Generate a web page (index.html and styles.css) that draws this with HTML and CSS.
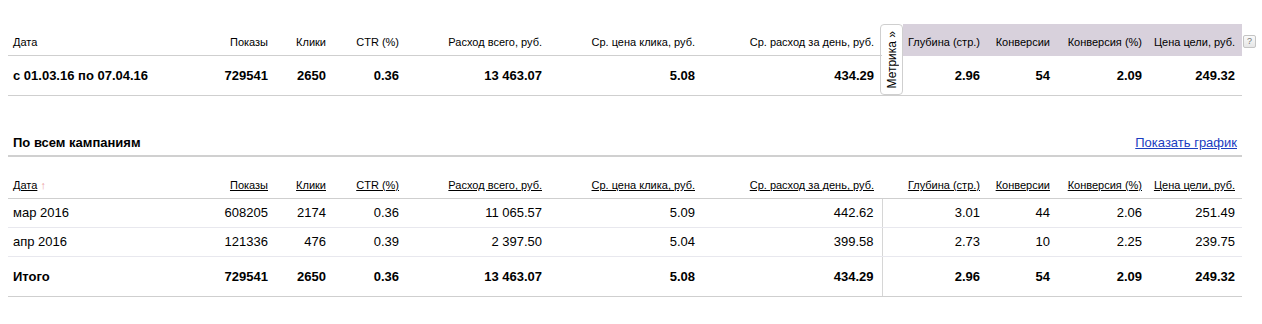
FILE: index.html
```html
<!DOCTYPE html>
<html lang="ru">
<head>
<meta charset="utf-8">
<title>Статистика</title>
<link rel="stylesheet" href="styles.css">
</head>
<body>
<div class="page">
  <div class="summary">
    <table class="stats summary-table">
      <colgroup>
        <col class="w-date"><col class="w-shows"><col class="w-clicks"><col class="w-ctr"><col class="w-spent"><col class="w-cpc"><col class="w-day"><col class="w-gap"><col class="w-depth"><col class="w-conv"><col class="w-convp"><col class="w-goal">
      </colgroup>
      <tbody>
        <tr class="head">
          <th class="left">Дата</th>
          <th>Показы</th>
          <th>Клики</th>
          <th>CTR (%)</th>
          <th>Расход всего, руб.</th>
          <th>Ср. цена клика, руб.</th>
          <th class="day">Ср. расход за день, руб.</th>
          <th class="tab-cell" rowspan="2"><div class="metrika-tab"><span>Метрика »</span></div></th>
          <th class="metrika">Глубина (стр.)</th>
          <th class="metrika">Конверсии</th>
          <th class="metrika">Конверсия (%)</th>
          <th class="metrika">Цена цели, руб.</th>
        </tr>
        <tr class="total">
          <td class="left">с 01.03.16 по 07.04.16</td>
          <td>729541</td>
          <td>2650</td>
          <td>0.36</td>
          <td>13 463.07</td>
          <td>5.08</td>
          <td class="day">434.29</td>
          <td>2.96</td>
          <td>54</td>
          <td>2.09</td>
          <td>249.32</td>
        </tr>
      </tbody>
    </table>
    <span class="help">?</span>
  </div>

  <div class="section-head">
    <h2 class="section-title">По всем кампаниям</h2>
    <a class="chart-link" href="#">Показать график</a>
  </div>

  <table class="stats detail-table">
    <colgroup>
      <col class="w-date"><col class="w-shows"><col class="w-clicks"><col class="w-ctr"><col class="w-spent"><col class="w-cpc"><col class="w-day"><col class="w-gap"><col class="w-depth"><col class="w-conv"><col class="w-convp"><col class="w-goal">
    </colgroup>
    <thead>
      <tr>
        <th class="left"><a href="#">Дата</a> <span class="sort">↑</span></th>
        <th><a href="#">Показы</a></th>
        <th><a href="#">Клики</a></th>
        <th><a href="#">CTR (%)</a></th>
        <th><a href="#">Расход всего, руб.</a></th>
        <th><a href="#">Ср. цена клика, руб.</a></th>
        <th class="day"><a href="#">Ср. расход за день, руб.</a></th>
        <th class="gap"></th>
        <th><a href="#">Глубина (стр.)</a></th>
        <th><a href="#">Конверсии</a></th>
        <th><a href="#">Конверсия (%)</a></th>
        <th><a href="#">Цена цели, руб.</a></th>
      </tr>
    </thead>
    <tbody>
      <tr class="row">
        <td class="left">мар 2016</td>
        <td>608205</td>
        <td>2174</td>
        <td>0.36</td>
        <td>11 065.57</td>
        <td>5.09</td>
        <td class="day">442.62</td>
        <td class="gap"></td>
        <td>3.01</td>
        <td>44</td>
        <td>2.06</td>
        <td>251.49</td>
      </tr>
      <tr class="row">
        <td class="left">апр 2016</td>
        <td>121336</td>
        <td>476</td>
        <td>0.39</td>
        <td>2 397.50</td>
        <td>5.04</td>
        <td class="day">399.58</td>
        <td class="gap"></td>
        <td>2.73</td>
        <td>10</td>
        <td>2.25</td>
        <td>239.75</td>
      </tr>
      <tr class="total">
        <td class="left">Итого</td>
        <td>729541</td>
        <td>2650</td>
        <td>0.36</td>
        <td>13 463.07</td>
        <td>5.08</td>
        <td class="day">434.29</td>
        <td class="gap"></td>
        <td>2.96</td>
        <td>54</td>
        <td>2.09</td>
        <td>249.32</td>
      </tr>
    </tbody>
  </table>
</div>
</body>
</html>
```

FILE: styles.css
```css
html, body {
  margin: 0;
  padding: 0;
  background: #fff;
}

body {
  font-family: "Liberation Sans", Arial, sans-serif;
  color: #000;
  font-size: 13px;
}

.page {
  padding: 24px 20px 0 8px;
  width: 1234px;
}

.summary {
  position: relative;
}

.stats {
  width: 1234px;
  table-layout: fixed;
  border-collapse: collapse;
  border-spacing: 0;
}

.w-date { width: 192px; }
.w-shows { width: 75px; }
.w-clicks { width: 58px; }
.w-ctr { width: 73px; }
.w-spent { width: 143px; }
.w-cpc { width: 153px; }
.w-day { width: 180px; }
.w-gap { width: 21px; }
.w-depth { width: 84px; }
.w-conv { width: 70px; }
.w-convp { width: 92px; }
.w-goal { width: 93px; }

.stats th {
  font-size: 11px;
  font-weight: normal;
  line-height: 16px;
  text-align: right;
  vertical-align: bottom;
  padding: 0 7px 5px 0;
  white-space: nowrap;
}

.stats td {
  font-size: 13px;
  line-height: 16px;
  text-align: right;
  vertical-align: middle;
  padding: 0 7px 0 0;
  white-space: nowrap;
}

.stats .left {
  text-align: left;
  padding-left: 5px;
}

.stats .day {
  padding-right: 8px;
}

/* summary table */
.summary-table tr.head th {
  height: 26px;
  border-bottom: 1px solid #cfcfcf;
}

.summary-table tr.head th.metrika {
  background: #d8d1dc;
  border-bottom: 1px solid #d8d1dc;
}

.summary-table tr.total td {
  height: 39px;
  border-bottom: 1px solid #cfcfcf;
  font-weight: bold;
}

.summary-table tr.head th.tab-cell {
  height: auto;
  padding: 0;
  vertical-align: top;
  border-bottom: 1px solid #cfcfcf;
}

.metrika-tab {
  box-sizing: border-box;
  width: 23px;
  height: 71px;
  margin-left: -2px;
  border: 1px solid #cfcfcf;
  border-radius: 4px;
  background: #fff;
  display: flex;
  align-items: center;
  justify-content: center;
}

.metrika-tab span {
  writing-mode: vertical-rl;
  transform: rotate(180deg);
  font-size: 12px;
  line-height: 14px;
  color: #000;
  white-space: nowrap;
}

.help {
  position: absolute;
  left: 1235px;
  top: 11px;
  box-sizing: border-box;
  width: 13px;
  height: 13px;
  border: 1px solid #c4c4c4;
  border-radius: 2px;
  background: linear-gradient(#fafafa, #e6e6e6);
  color: #777;
  font-size: 9px;
  line-height: 11px;
  text-align: center;
}

/* section header */
.section-head {
  margin-top: 39px;
  display: flex;
  justify-content: space-between;
  align-items: baseline;
  padding: 0 5px 4px 5px;
  border-bottom: 2px solid #d0d0d0;
}

.section-title {
  margin: 0;
  font-size: 13px;
  font-weight: bold;
  line-height: 16px;
}

.chart-link {
  font-size: 13px;
  line-height: 16px;
  color: #1a3dc1;
  text-decoration: underline;
}

/* detail table */
.detail-table thead th {
  height: 36px;
  border-bottom: 1px solid #cfcfcf;
}

.detail-table thead a {
  color: #000;
  text-decoration: underline;
}

.detail-table .sort {
  color: #eba3a3;
  font-size: 11px;
}

.detail-table tr.row td {
  height: 28px;
  border-bottom: 1px solid #e8e8ee;
}

.detail-table tr.total td {
  height: 39px;
  border-bottom: 1px solid #cfcfcf;
  font-weight: bold;
}

.detail-table td.gap {
  border-left: 1px solid #d6d6d6;
  padding: 0;
}
```
